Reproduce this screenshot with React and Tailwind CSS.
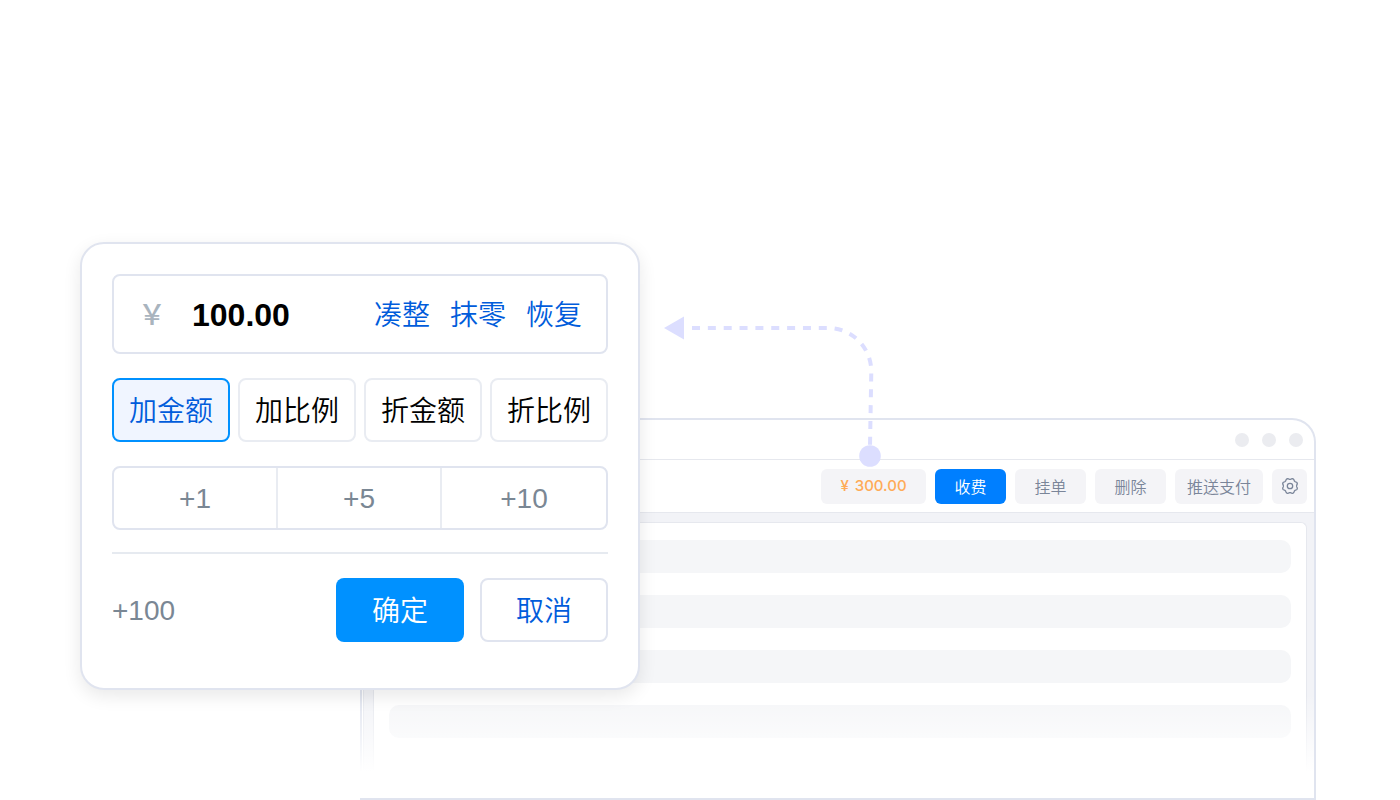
import React, { useState } from "react";

const modes = ["加金额", "加比例", "折金额", "折比例"];
const steps = ["+1", "+5", "+10"];
const roundings = ["凑整", "抹零", "恢复"];

const gearOutline =
  Array.from({ length: 96 }, (_, i) => {
    const t = (i / 96) * Math.PI * 2;
    const r = 7.2 - 0.6 * Math.cos(8 * t);
    const x = (9 + r * Math.sin(t)).toFixed(2);
    const y = (9 - r * Math.cos(t)).toFixed(2);
    return `${i ? "L" : "M"}${x} ${y}`;
  }).join("") + "Z";

function GearIcon() {
  return (
    <svg className="size-[18px]" viewBox="0 0 18 18" fill="none" stroke="#7a8599" strokeWidth="1.3" strokeLinejoin="round" aria-hidden="true">
      <path d={gearOutline} />
      <circle cx="9" cy="9" r="2.7" />
    </svg>
  );
}

function ToolButton({ children, className = "w-[71px]" }) {
  return (
    <button type="button" className={`flex h-[35px] shrink-0 items-center justify-center rounded-[6px] bg-[#f4f4f7] text-[#7a8599] ${className}`}>
      {children}
    </button>
  );
}

function Connector() {
  return (
    <svg className="pointer-events-none absolute -top-[106px] right-[430px] h-[154px] w-[220px]" viewBox="664 314 220 154" fill="none" aria-hidden="true">
      <path d="M664 328L684 316.5V339.5Z" fill="#dcdeff" />
      <path d="M692 328H828A43.3 43.3 0 0 1 871.3 371.3L870 446" stroke="#dcdeff" strokeWidth="4" strokeDasharray="8 7.85" />
      <circle cx="870" cy="456" r="10.8" fill="#dcdeff" />
    </svg>
  );
}

function BillingWindow() {
  return (
    <section className="relative col-start-1 row-start-1 mt-[176px] ml-[280px] flex flex-col rounded-tr-[24px] border-y-2 border-r-2 border-[#e0e4ef] bg-white">
      <header className="flex h-10 items-center justify-end gap-[13px] border-b border-[#e6e8ee] pr-[11px]">
        <span className="size-[14px] rounded-full bg-[#ebecf0]" />
        <span className="size-[14px] rounded-full bg-[#ebecf0]" />
        <span className="size-[14px] rounded-full bg-[#ebecf0]" />
      </header>
      <div className="flex h-[53px] items-center justify-end gap-[9px] border-b border-[#e6e8ee] pr-[7px] text-[16px]">
        <span className="flex h-[35px] w-[105px] items-center justify-center gap-[6px] rounded-[6px] bg-[#f4f4f7] font-['Inter',sans-serif] text-[15px] font-medium text-[#ffab57]">
          <span>¥</span>
          <span>300.00</span>
        </span>
        <button type="button" className="h-[35px] w-[71px] rounded-[6px] bg-[#007fff] text-white">收费</button>
        <ToolButton>挂单</ToolButton>
        <ToolButton>删除</ToolButton>
        <ToolButton className="w-[88px]">推送支付</ToolButton>
        <button type="button" aria-label="设置" className="flex size-[35px] items-center justify-center rounded-[6px] bg-[#f4f4f7]">
          <GearIcon />
        </button>
      </div>
      <div className="relative grow border-l-2 border-[#e0e4ef] pl-px">
        <div className="h-full border-l border-[#e6e8ee] bg-[#f2f3f7] pt-[9px] pr-[7px] pl-[9px]">
          <div className="flex h-full flex-col gap-[22px] rounded-t-[6px] border-x border-t border-[#e6e8ee] bg-white px-[15px] pt-[17px] pb-[60px]">
            <div className="h-[33px] rounded-[10px] bg-[#f5f6f8]" />
            <div className="h-[33px] rounded-[10px] bg-[#f5f6f8]" />
            <div className="h-[33px] rounded-[10px] bg-[#f5f6f8]" />
            <div className="h-[33px] rounded-[10px] bg-[#f5f6f8]" />
          </div>
        </div>
        <div className="absolute right-0 bottom-0 -left-[2px] h-[104px] bg-linear-to-b from-white/0 to-white to-75%" />
      </div>
      <Connector />
    </section>
  );
}

function AdjustCard() {
  const [amount, setAmount] = useState("100.00");
  const [mode, setMode] = useState(0);
  return (
    <section className="z-10 col-start-1 row-start-1 w-[560px] self-start rounded-[24px] border-2 border-[#e0e4ef] bg-white px-[30px] pt-[30px] pb-[46px] text-[28px] leading-10 shadow-[0_6px_18px_rgba(0,0,0,0.09)]">
      <div className="flex h-20 items-center rounded-[8px] border-2 border-[#e0e4ef] px-6">
        <label htmlFor="amount" className="w-[54px] pb-0.5 font-medium text-[#a9b4be]">￥</label>
        <input
          id="amount"
          value={amount}
          onChange={(e) => setAmount(e.target.value)}
          className="w-0 min-w-0 grow bg-transparent pt-0.5 font-['Liberation_Sans',sans-serif] text-[32px] font-bold text-black outline-none"
        />
        <div className="flex gap-5 text-[#005cdb]">
          {roundings.map((r) => (
            <button key={r} type="button" className="pb-0.5">{r}</button>
          ))}
        </div>
      </div>
      <div className="mt-6 grid grid-cols-4 gap-2">
        {modes.map((m, i) => (
          <button
            key={m}
            type="button"
            aria-pressed={i === mode}
            onClick={() => setMode(i)}
            className={`h-16 rounded-[8px] border-2 pb-0.5 ${i === mode ? "border-[#0091ff] bg-[#f0f5ff] text-[#005cdb]" : "border-[#e9ecf2] text-black"}`}
          >
            {m}
          </button>
        ))}
      </div>
      <div className="mt-6 grid h-16 grid-cols-3 divide-x-2 divide-[#e9ecf2] rounded-[8px] border-2 border-[#e0e4ef] font-['Liberation_Sans',sans-serif] text-[#7a8794]">
        {steps.map((s) => (
          <button key={s} type="button" className="pt-0.5">{s}</button>
        ))}
      </div>
      <div className="mt-[22px] flex items-center gap-4 border-t-2 border-[#e6eaf0] pt-6">
        <span className="grow pt-0.5 font-['Liberation_Sans',sans-serif] text-[#7a8794]">+100</span>
        <button type="button" className="h-16 w-32 rounded-[8px] bg-[#0091ff] pb-0.5 text-white">确定</button>
        <button type="button" className="h-16 w-32 rounded-[8px] border-2 border-[#e0e4ef] pb-0.5 text-[#005cdb]">取消</button>
      </div>
    </section>
  );
}

export default function App() {
  return (
    <main className="grid min-h-screen bg-white pt-[242px] pr-[84px] pl-20 font-['Noto_Sans_CJK_SC',sans-serif] font-[350]">
      <BillingWindow />
      <AdjustCard />
    </main>
  );
}
